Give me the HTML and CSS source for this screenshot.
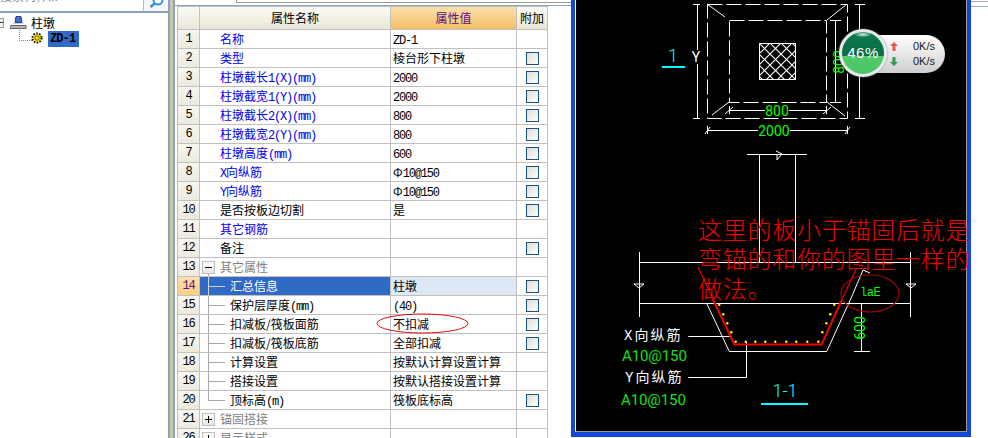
FILE: index.html
```html
<!DOCTYPE html>
<html lang="zh">
<head>
<meta charset="utf-8">
<title>柱墩属性</title>
<link rel="stylesheet" href="styles.css">
</head>
<body>
<div class="app">
  <aside class="tree-pane">
    <div class="search">
      <div class="search-input"><span>搜索构件...</span></div>
      <div class="search-btn">
        <svg width="24" height="11" viewBox="0 0 24 11"><circle cx="14" cy="0" r="4.5" fill="none" stroke="#3a8fd8" stroke-width="2"/><path d="M10.5 3.5L6.5 7" stroke="#3a8fd8" stroke-width="2.5" fill="none"/></svg>
      </div>
    </div>
    <div class="tree">
      <div class="tree-root">
        <span class="tree-exp"></span>
        <svg class="tree-icon" width="17" height="13" viewBox="0 0 17 13"><path d="M6 0.5h5l1 6H5z" fill="#3f6fc8" stroke="#24408c"/><path d="M3 7.5h11" stroke="#c8d4e8" stroke-width="1"/><path d="M1 9.5h15v3H0z" fill="#b8b8b8" stroke="#606060"/></svg>
        <span>柱墩</span>
      </div>
      <div class="tree-child">
        <svg class="tree-link" width="13" height="12" viewBox="0 0 13 12"><path d="M0.5 0v10.5H13" fill="none" stroke="#808080" stroke-dasharray="1 1"/></svg>
        <svg class="tree-gear" width="12" height="12" viewBox="0 0 12 12"><circle cx="6" cy="6" r="4.6" fill="#ffee22" stroke="#111" stroke-width="2" stroke-dasharray="1.6 1.3"/><circle cx="6" cy="6" r="2.2" fill="#ffe800" stroke="#6a5a00" stroke-width="1"/></svg>
        <span class="tree-sel">ZD-1</span>
      </div>
    </div>
  </aside>
  <div class="splitter"></div>
  <main class="props-pane">
    <div class="top-strip"></div>
    <div class="props-frame">
      <div class="table-wrap">
        <table class="props">
          <colgroup><col class="c-num"><col class="c-name"><col class="c-val"><col class="c-att"></colgroup>
          <thead>
            <tr><th class="num"></th><th>属性名称</th><th class="th-val">属性值</th><th>附加</th></tr>
          </thead>
          <tbody>
            <tr><td class="num">1</td><td class="link">名称</td><td class="val"><span class="m">ZD-1</span></td><td></td></tr>
            <tr><td class="num">2</td><td class="link">类型</td><td class="val">棱台形下柱墩</td><td><span class="chk"></span></td></tr>
            <tr><td class="num">3</td><td class="link">柱墩截长<span class="m">1(X)(mm)</span></td><td class="val"><span class="m">2000</span></td><td><span class="chk"></span></td></tr>
            <tr><td class="num">4</td><td class="link">柱墩截宽<span class="m">1(Y)(mm)</span></td><td class="val"><span class="m">2000</span></td><td><span class="chk"></span></td></tr>
            <tr><td class="num">5</td><td class="link">柱墩截长<span class="m">2(X)(mm)</span></td><td class="val"><span class="m">800</span></td><td><span class="chk"></span></td></tr>
            <tr><td class="num">6</td><td class="link">柱墩截宽<span class="m">2(Y)(mm)</span></td><td class="val"><span class="m">800</span></td><td><span class="chk"></span></td></tr>
            <tr><td class="num">7</td><td class="link">柱墩高度<span class="m">(mm)</span></td><td class="val"><span class="m">600</span></td><td><span class="chk"></span></td></tr>
            <tr><td class="num">8</td><td class="link"><span class="m">X</span>向纵筋</td><td class="val">Φ<span class="m">10@150</span></td><td><span class="chk"></span></td></tr>
            <tr><td class="num">9</td><td class="link"><span class="m">Y</span>向纵筋</td><td class="val">Φ<span class="m">10@150</span></td><td><span class="chk"></span></td></tr>
            <tr><td class="num">10</td><td class="top">是否按板边切割</td><td class="val">是</td><td><span class="chk"></span></td></tr>
            <tr><td class="num">11</td><td class="link">其它钢筋</td><td class="val"></td><td></td></tr>
            <tr><td class="num">12</td><td class="top">备注</td><td class="val"></td><td><span class="chk"></span></td></tr>
            <tr><td class="num">13</td><td class="group open"><span class="exp minus"></span>其它属性</td><td class="val"></td><td></td></tr>
            <tr class="active"><td class="num">14</td><td class="child">汇总信息</td><td class="val">柱墩</td><td><span class="chk"></span></td></tr>
            <tr><td class="num">15</td><td class="child">保护层厚度<span class="m">(mm)</span></td><td class="val"><span class="m">(40)</span></td><td><span class="chk"></span></td></tr>
            <tr><td class="num">16</td><td class="child">扣减板/筏板面筋</td><td class="val">不扣减</td><td><span class="chk"></span></td></tr>
            <tr><td class="num">17</td><td class="child">扣减板/筏板底筋</td><td class="val">全部扣减</td><td><span class="chk"></span></td></tr>
            <tr><td class="num">18</td><td class="child">计算设置</td><td class="val">按默认计算设置计算</td><td></td></tr>
            <tr><td class="num">19</td><td class="child">搭接设置</td><td class="val">按默认搭接设置计算</td><td></td></tr>
            <tr><td class="num">20</td><td class="child last">顶标高<span class="m">(m)</span></td><td class="val">筏板底标高</td><td><span class="chk"></span></td></tr>
            <tr><td class="num">21</td><td class="group"><span class="exp plus"></span>锚固搭接</td><td class="val"></td><td></td></tr>
            <tr><td class="num">26</td><td class="group"><span class="exp plus"></span>显示样式</td><td class="val"></td><td></td></tr>
          </tbody>
        </table>
        <svg class="note-ellipse" width="93" height="21" viewBox="0 0 93 21"><ellipse cx="46.5" cy="10.5" rx="45.5" ry="9.5" fill="none" stroke="#e01010"/></svg>
      </div>
    </div>
  </main>
  <section class="cad-window">
    <div class="cad-canvas">
      <svg class="cad" width="390" height="431" viewBox="576 0 390 431">
        <defs>
          <pattern id="hatch" width="11" height="11" patternUnits="userSpaceOnUse" x="759" y="43">
            <path d="M0 0L11 11M11 0L0 11" stroke="#fff" stroke-width="1.1"/>
          </pattern>
        </defs>
        <g class="ln">
          <rect class="dash" x="707.5" y="4.5" width="140" height="114"/>
          <rect class="dash" x="729.5" y="20.5" width="97" height="82"/>
          <rect class="hatched" x="759.5" y="43.5" width="36" height="36"/>
          <path d="M707 4L725 17M847 4L827 20M712 115L729 102M827 102L845 116"/>
          <path d="M697.5 4V50M697.5 64V118M693 4.5H700M693 118.5H700"/>
          <path d="M859.5 4V118M855 4.5H865M855 118.5H865"/>
          <path d="M835.5 20V102M830 20.5H841M830 102.5H841"/>
          <path d="M729 110.5H765M789 110.5H827M729.5 106V114M826.5 106V114M725 114L733 107M823 114L831 107"/>
          <path d="M707 130.5H758M790 130.5H847M707.5 126V134M847.5 126V134M705 134L710 127M845 134L850 127"/>
          <path d="M759.5 154V262M795.5 154V262M747 154.5H807M776 151L782 154L777 160L777 154"/>
          <path d="M639.5 252V317M910.5 252V317M639 262.5H911M639 303.5H911"/>
          <path d="M634 284H644L639 288ZM906 284H916L911 288Z"/>
          <path d="M706.7 303.3L729.3 351.5H826.7L852 296L863 270L870 273"/>
          <path d="M688.3 336.5H731.7M746.5 342V377.5H688.3"/>
          <path d="M861.5 303V352M854 351.5H870M856 303.5H870"/>
        </g>
        <path class="rebar" d="M713.3 300L734.3 344.5H821.7L841.7 300"/>
        <path class="rebar thin" d="M698 267L713.3 300M841.7 300L856.7 268"/>
        <g class="dots">
          <circle cx="735.7" cy="341.7" r="1.2"/><circle cx="745.7" cy="341.7" r="1.2"/><circle cx="755.3" cy="341.7" r="1.2"/><circle cx="765.3" cy="341.7" r="1.2"/><circle cx="775.3" cy="341.7" r="1.2"/><circle cx="786.3" cy="341.7" r="1.2"/><circle cx="796.3" cy="341.7" r="1.2"/><circle cx="807.3" cy="341.7" r="1.2"/><circle cx="818.3" cy="341.7" r="1.2"/>
          <circle cx="731.3" cy="332.3" r="1.2"/><circle cx="727.3" cy="323.3" r="1.2"/><circle cx="723.3" cy="314.3" r="1.2"/><circle cx="719.3" cy="304.7" r="1.2"/>
          <circle cx="822.3" cy="332.3" r="1.2"/><circle cx="826.3" cy="323.3" r="1.2"/><circle cx="830.3" cy="314.3" r="1.2"/><circle cx="834.3" cy="304.7" r="1.2"/>
        </g>
        <ellipse class="ring" cx="870" cy="293.5" rx="29" ry="18.5"/>
        <rect class="bar" x="662" y="66" width="23" height="2"/>
        <rect class="bar" x="761" y="403" width="47" height="2"/>
        <text class="t cy big" x="673" y="62" text-anchor="middle">1</text>
        <text class="t wh" x="696" y="62" text-anchor="middle">Y</text>
        <text class="t gr" x="777" y="116" text-anchor="middle">800</text>
        <text class="t gr" x="774" y="136" text-anchor="middle">2000</text>
        <text class="t gr" transform="translate(844 62) rotate(-90)" text-anchor="middle">800</text>
        <text class="t gr" transform="translate(866 61) rotate(-90)" text-anchor="middle">2000</text>
        <text class="t gr" transform="translate(865 328) rotate(-90)" text-anchor="middle">600</text>
        <text class="t gr small" x="860" y="296">laE</text>
        <text class="t wh cjk" x="624" y="340">X向纵筋</text>
        <text class="t gr code" x="622" y="361">A10@150</text>
        <text class="t wh cjk" x="625" y="382">Y向纵筋</text>
        <text class="t gr code" x="621" y="405">A10@150</text>
        <text class="t cy big" x="785" y="397" text-anchor="middle">1-1</text>
        <text class="note" x="698" y="239">这里的板小于锚固后就是</text>
        <text class="note" x="698" y="268">弯锚的和你的图里一样的</text>
        <text class="note" x="698" y="298">做法。</text>
      </svg>
      <div class="net-widget">
        <div class="net-pill">
          <div class="net-row">
            <svg width="8" height="9" viewBox="0 0 8 9"><path d="M4 0L8 4H5.5V9H2.5V4H0Z" fill="#e25a4a"/></svg>
            <span>0K/s</span>
          </div>
          <div class="net-row">
            <svg width="8" height="9" viewBox="0 0 8 9"><path d="M4 9L8 5H5.5V0H2.5V5H0Z" fill="#2f9a5c"/></svg>
            <span>0K/s</span>
          </div>
        </div>
        <div class="net-globe"><span>46%</span></div>
      </div>
    </div>
  </section>
  <div class="rest"></div>
</div>
</body>
</html>
```
FILE: styles.css
```css
html, body {
  margin: 0;
  padding: 0;
  background: #fff;
  overflow: hidden;
}

.app {
  display: flex;
  width: 988px;
  height: 438px;
  overflow: hidden;
  font: 12px/18px "Noto Sans CJK SC", "Liberation Sans", sans-serif;
  color: #000;
  background: #fff;
}

/* Latin runs in the SimSun-like width of 6px per character */
.m {
  font-family: "Liberation Mono", monospace;
  font-size: 12px;
  line-height: 1;
  letter-spacing: -1.2px;
}

/* tree pane */
.tree-pane {
  flex: none;
  width: 168px;
  display: flex;
  flex-direction: column;
}
.search {
  display: flex;
  height: 11px;
  flex: none;
}
.search-input {
  width: 143px;
  height: 11px;
  overflow: hidden;
  color: #888;
}
.search-input span {
  display: block;
  margin-top: -13px;
  line-height: 18px;
}
.search-btn {
  width: 24px;
  height: 11px;
  border-left: 1px solid #a9c1d8;
  background: #f4f7fb;
}
.search-btn svg {
  display: block;
}
.tree {
  flex: 1;
  border-top: 2px solid #8aa4bf;
  padding-top: 1px;
}
.tree-root {
  display: flex;
  align-items: center;
  height: 17px;
}
.tree-exp {
  width: 3px;
  height: 8px;
  border: 1px solid #999;
  border-left: none;
  background: linear-gradient(#333, #333) 0 3px / 3px 1px no-repeat #f2f2f2;
  margin-right: 6px;
}
.tree-icon {
  margin-right: 4px;
}
.tree-child {
  display: flex;
  align-items: flex-start;
  margin-left: 19px;
  height: 16px;
}
.tree-link {
  margin-top: -1px;
}
.tree-gear {
  margin: 1px 0 0 -1px;
}
.tree-sel {
  margin-left: 5px;
  width: 31px;
  height: 16px;
  line-height: 16px;
  background: #316ac5;
  font-family: "Liberation Mono", monospace;
  font-weight: bold;
  font-size: 12px;
  letter-spacing: -0.9px;
  text-indent: 2px;
}

/* splitter */
.splitter {
  flex: none;
  width: 7px;
  background: #c9c5b0;
  border-left: 2px solid #8aa4bf;
  border-right: 2px solid #8aa4bf;
  box-sizing: border-box;
}

/* properties */
.props-pane {
  flex: none;
  width: 396px;
  display: flex;
  flex-direction: column;
}
.top-strip {
  flex: none;
  height: 2px;
  margin-left: 61px;
  border-left: 1px solid #999;
  border-bottom: 1px solid #999;
}
.props-frame {
  flex: 1;
  margin-top: 2px;
  border-top: 1px solid #8aa4bf;
  padding-left: 2px;
}
.table-wrap {
  position: relative;
  width: 371px;
}
.props {
  border-collapse: separate;
  border-spacing: 0;
  table-layout: fixed;
  width: 371px;
  border-left: 1px solid #c0c0c0;
  border-top: 1px solid #c0c0c0;
}
.c-num { width: 22px; }
.c-name { width: 191px; }
.c-val { width: 126px; }
.c-att { width: 31px; }

.props th,
.props td {
  box-sizing: border-box;
  height: 19px;
  padding: 0;
  border-right: 1px solid #c0c0c0;
  border-bottom: 1px solid #c0c0c0;
  white-space: nowrap;
  overflow: hidden;
  line-height: 18px;
}
.props th {
  height: 23px;
  font-weight: normal;
  text-align: center;
  background: linear-gradient(#fbfaf5, #e9e7d8);
}
.props th.th-val {
  background: linear-gradient(#fbdfa9, #f4c068);
  color: #5b0f86;
}
.props td.num {
  text-align: center;
  background: linear-gradient(#f7f6ef, #eceadd);
  font-family: "Liberation Mono", monospace;
  font-size: 12px;
  letter-spacing: -1.2px;
}
.props td.link {
  padding-left: 20px;
  color: #0000f0;
}
.props td.top {
  padding-left: 20px;
}
.props td.val {
  padding-left: 2px;
}
.props td.group {
  padding-left: 2px;
  color: #808080;
}
.props td.child {
  padding-left: 30px;
  background:
    linear-gradient(#a8a8a8, #a8a8a8) 8px 9px / 17px 1px no-repeat,
    linear-gradient(#a8a8a8, #a8a8a8) 8px 0 / 1px 100% no-repeat;
}
.props td.child.last {
  background:
    linear-gradient(#a8a8a8, #a8a8a8) 8px 9px / 17px 1px no-repeat,
    linear-gradient(#a8a8a8, #a8a8a8) 8px 0 / 1px 10px no-repeat;
}
.props td.group.open {
  background: linear-gradient(#a8a8a8, #a8a8a8) 8px 16px / 1px 3px no-repeat;
}
.exp {
  display: inline-block;
  box-sizing: border-box;
  width: 13px;
  height: 13px;
  margin-right: 5px;
  vertical-align: -2px;
  border: 1px solid #bdbdbd;
}
.exp.minus {
  background: linear-gradient(#000, #000) 2px 5px / 7px 1px no-repeat, linear-gradient(#fff, #e4e4e0);
}
.exp.plus {
  background:
    linear-gradient(#000, #000) 2px 5px / 7px 1px no-repeat,
    linear-gradient(#000, #000) 5px 2px / 1px 7px no-repeat,
    linear-gradient(#fff, #e4e4e0);
}
.chk {
  display: block;
  box-sizing: border-box;
  width: 13px;
  height: 13px;
  margin: 0 0 0 9px;
  border: 1px solid #1c5180;
  background: linear-gradient(135deg, #dcdcd7, #fff);
}
.active td.num {
  background: linear-gradient(#fde0a5, #fbcf80);
  color: #5b0f86;
}
.active td.child {
  color: #fff;
  background:
    linear-gradient(#c8d4ea, #c8d4ea) 8px 9px / 17px 1px no-repeat,
    linear-gradient(#c8d4ea, #c8d4ea) 8px 0 / 1px 100% no-repeat,
    #316ac5;
}
.active td.val {
  background: #dfe8f5;
}
.note-ellipse {
  position: absolute;
  left: 199px;
  top: 307px;
}

/* CAD window */
.cad-window {
  flex: none;
  width: 400px;
  height: 437px;
  box-sizing: border-box;
  border: solid #1446d8;
  border-width: 0 4px 5px;
}
.cad-canvas {
  position: relative;
  box-sizing: border-box;
  width: 392px;
  height: 432px;
  background: #000;
  border-left: 1px solid #fff;
  border-right: 1px solid #999;
  border-bottom: 1px solid #999;
}
.cad {
  display: block;
  overflow: visible;
}
.ln path, .ln rect {
  fill: none;
  stroke: #fff;
  stroke-width: 1;
}
.ln .hatched {
  fill: url(#hatch);
}
.ln .dash {
  stroke-dasharray: 15 4;
}
.rebar {
  fill: none;
  stroke: #f00000;
  stroke-width: 2;
}
.rebar.thin {
  stroke-width: 1.2;
}
.dots circle {
  fill: #ffff00;
}
.ring {
  fill: none;
  stroke: #a00808;
  stroke-width: 1.2;
}
.bar {
  fill: #00ffff;
}
.t {
  font-family: Roboto, "Liberation Sans", sans-serif;
  font-weight: 400;
  font-size: 14px;
}
.t.gr { fill: #00ff00; }
.t.wh { fill: #fff; }
.t.cy { fill: #00ffff; font-weight: 300; }
.t.big { font-size: 18px; }
.t.small { font-size: 12px; font-family: "Liberation Mono", monospace; letter-spacing: -0.4px; }
.t.code { font-size: 15px; letter-spacing: -0.1px; fill: #14e014; }
.t.cjk {
  font-family: "Liberation Mono", "Noto Sans CJK SC", sans-serif;
  font-size: 14px;
  letter-spacing: 2px;
}
.note {
  font-family: "Noto Sans CJK SC", sans-serif;
  font-size: 24px;
  font-weight: 300;
  letter-spacing: 0.75px;
  fill: #f00000;
}

/* network speed widget */
.net-widget {
  position: absolute;
  left: 263px;
  top: 29px;
  width: 106px;
  height: 48px;
}
.net-pill {
  position: absolute;
  left: 24px;
  top: 6px;
  box-sizing: border-box;
  width: 82px;
  height: 38px;
  padding: 4px 10px 4px 27px;
  border-radius: 0 19px 19px 0;
  background: linear-gradient(#fff, #cfcfcf);
  box-shadow: 0 1px 2px rgba(0, 0, 0, .4);
  display: flex;
  flex-direction: column;
  justify-content: center;
  font: 11px/15px "Liberation Sans", sans-serif;
  color: #222;
}
.net-row {
  display: flex;
  align-items: center;
  justify-content: space-between;
  height: 15px;
}
.net-globe {
  position: absolute;
  left: 0;
  top: 0;
  box-sizing: border-box;
  width: 48px;
  height: 48px;
  border: 3px solid #e6ece8;
  border-radius: 50%;
  box-shadow: 0 0 2px #777;
  background:
    radial-gradient(ellipse 9px 3px at 50% 6%, rgba(255, 255, 255, .85), rgba(255, 255, 255, 0)),
    linear-gradient(#0a7a4c 0, #0a6c44 57%, #52ca6a 57%, #4dc466 100%);
  display: flex;
  align-items: center;
  justify-content: center;
  font: 15px/1 "Liberation Sans", sans-serif;
  color: #fff;
  letter-spacing: .5px;
}
.net-globe span {
  margin-top: -2px;
}

/* remainder of the screen */
.rest {
  flex: 1;
  height: 4px;
  margin-top: 1px;
  border-top: 1px solid #aab;
  border-bottom: 1px solid #9ab;
}
```
